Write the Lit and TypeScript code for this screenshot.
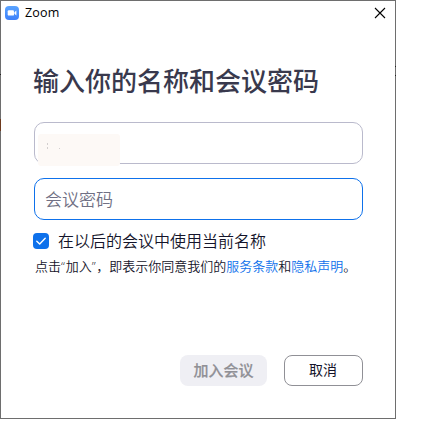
import { LitElement, html, css } from "lit";
import { customElement } from "lit/decorators.js";

@customElement("app-root")
export class AppRoot extends LitElement {
  static styles = css`
    :host {
      display: block;
      width: 432px;
      height: 427px;
      overflow: hidden;
      background: #fff;
      font-family: "Open Sans", "Noto Sans CJK SC", sans-serif;
      font-weight: 350;
      color: #14142a;
    }
    * {
      box-sizing: border-box;
    }
    .window {
      position: relative;
      width: 396px;
      height: 419px;
      border: 1px solid #6e6e6e;
      background: #fff;
      display: flex;
      flex-direction: column;
    }
    .titlebar {
      height: 24px;
      padding: 0 9px 0 4px;
      display: flex;
      align-items: center;
      color: #000;
      font-size: 12.5px;
      font-weight: 400;
      letter-spacing: 0.2px;
      line-height: 24px;
      flex: none;
    }
    .logo {
      width: 14px;
      height: 14px;
      margin-right: 6px;
    }
    .name {
      flex: 1;
    }
    .close {
      width: 12px;
      height: 12px;
    }
    .edge {
      position: absolute;
      left: -1px;
      width: 1px;
    }
    .edge.brown {
      top: 118px;
      height: 12px;
      background: #6e3a1e;
    }
    .edge.dark {
      top: 73px;
      height: 1px;
      background: #222;
    }
    .edge.right {
      left: 394px;
      top: 65px;
      height: 10px;
      border-top: 1px solid #222;
      border-bottom: 1px solid #222;
    }
    .body {
      flex: 1;
      padding: 36px 32px 32px 33px;
      display: flex;
      flex-direction: column;
    }
    h1 {
      margin: 0 0 19px -1px;
      height: 42px;
      line-height: 41px;
      font-size: 26px;
      font-weight: 500;
      color: #39394d;
      white-space: nowrap;
    }
    .field {
      position: relative;
      height: 42px;
      border: 1px solid #babacc;
      border-radius: 10px;
      margin-bottom: 14px;
      padding-left: 10px;
      font-size: 17px;
      line-height: 42px;
      color: #707084;
      flex: none;
    }
    .field.focus {
      border-color: #0e71eb;
      margin-bottom: 12px;
    }
    .mask {
      position: absolute;
      left: 3px;
      top: 11px;
      width: 82px;
      height: 32px;
      border-radius: 3px;
      background: #fdf9f6;
    }
    .mask svg {
      display: block;
    }
    .check {
      display: flex;
      align-items: center;
      height: 18px;
      margin-left: -1px;
      font-size: 16px;
      line-height: 18px;
      white-space: nowrap;
    }
    .box {
      width: 16px;
      height: 16px;
      margin-right: 9px;
      flex: none;
    }
    .label {
      margin-top: -1px;
    }
    .terms {
      margin: 7px 0 0 1px;
      height: 18px;
      font-size: 13px;
      line-height: 18px;
      white-space: nowrap;
    }
    .quote {
      letter-spacing: 0.7px;
    }
    .link {
      color: #0e71eb;
    }
    .actions {
      margin-top: auto;
      display: flex;
      justify-content: flex-end;
      gap: 17px;
    }
    .btn {
      height: 31px;
      border-radius: 8px;
      text-align: center;
      line-height: 30px;
      white-space: nowrap;
    }
    .join {
      width: 87px;
      background: #efeff4;
      color: #909096;
      font-size: 15px;
      font-weight: 500;
      -webkit-text-stroke: 0.2px #909096;
    }
    .cancel {
      width: 79px;
      border: 1px solid #909096;
      padding-right: 1px;
      font-size: 14px;
      font-weight: 400;
      line-height: 28px;
    }
  `;

  render() {
    return html`
      <div class="window">
        <div class="titlebar">
          <svg class="logo" viewBox="0 0 14 14">
            <defs>
              <linearGradient id="sky" x1="0" y1="0" x2="0" y2="1">
                <stop offset="0" stop-color="#5aa4ff" />
                <stop offset="1" stop-color="#3d80fa" />
              </linearGradient>
            </defs>
            <rect width="14" height="14" rx="4" fill="url(#sky)" />
            <rect x="2.7" y="4.3" width="6.3" height="5.3" rx="1.2" fill="#fff" />
            <path d="M9.4 6.3 11.4 4.6V9.4L9.4 7.8Z" fill="#fff" />
          </svg>
          <span class="name">Zoom</span>
          <svg class="close" viewBox="0 0 12 12">
            <path d="M1 1 11 11M11 1 1 11" fill="none" stroke="#000" stroke-width="1.1" />
          </svg>
        </div>
        <div class="body">
          <h1>输入你的名称和会议密码</h1>
          <div class="field">
            <div class="mask">
              <svg width="82" height="32" viewBox="0 0 82 32">
                <path d="M9 9h1v2h-1zM9 13h1v2h-1zM21 14h1v1h-1z" fill="#d3cfcf" />
              </svg>
            </div>
          </div>
          <div class="field focus">会议密码</div>
          <div class="check">
            <svg class="box" viewBox="0 0 16 16">
              <rect width="16" height="16" rx="4" fill="#0e71eb" />
              <path
                d="M3.8 8.2 6.7 11 12.2 5.2"
                fill="none"
                stroke="#fff"
                stroke-width="1.4"
                stroke-linecap="round"
                stroke-linejoin="round"
              />
            </svg>
            <span class="label">在以后的会议中使用当前名称</span>
          </div>
          <div class="terms">点击<span class="quote">“</span>加入<span class="quote">”</span>，即表示你同意我们的<span class="link">服务条款</span>和<span class="link">隐私声明</span>。</div>
          <div class="actions">
            <div class="btn join">加入会议</div>
            <div class="btn cancel">取消</div>
          </div>
        </div>
        <span class="edge dark"></span>
        <span class="edge brown"></span>
        <span class="edge right"></span>
      </div>
    `;
  }
}
